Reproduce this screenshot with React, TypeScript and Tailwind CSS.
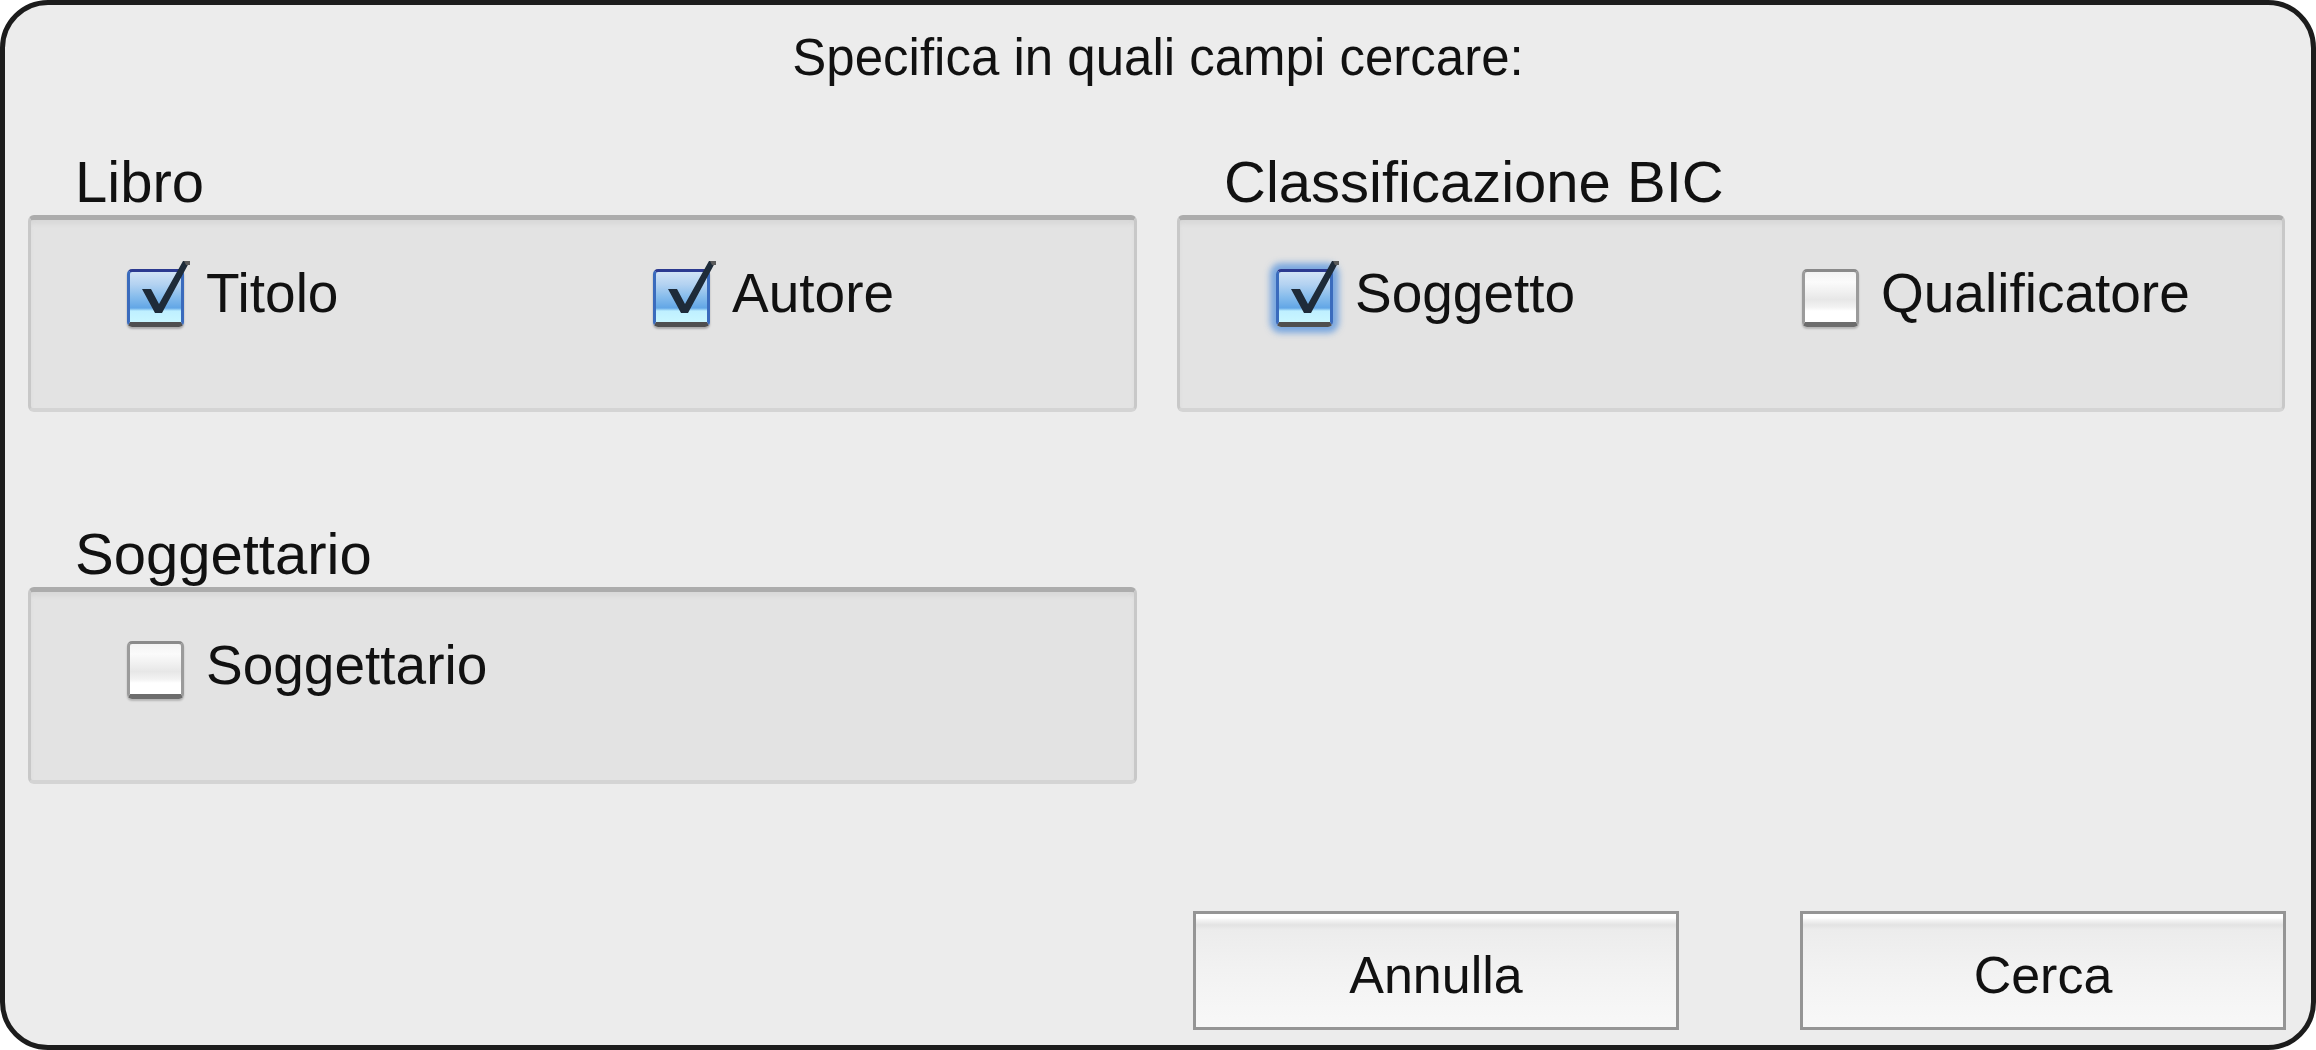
import React from "react";

function Tick() {
  return (
    <svg
      className="absolute left-0 top-[-14px] w-[68px] h-[72px] overflow-visible"
      viewBox="0 -14 68 72"
    >
      <polygon
        points="12,17 21,17 29,32 53,-11 60,-11 32,41 25,41"
        fill="#1e2b39"
      />
      <polygon points="54,-11 60,-11 60,-7 56,-7" fill="#5a5a5a" />
    </svg>
  );
}

function CheckBox({ checked, focused }: { checked: boolean; focused?: boolean }) {
  if (checked) {
    return (
      <div
        className={
          "relative mt-[3px] w-[57px] h-[58px] shrink-0 rounded-[5px] border-x-[3px] border-x-[#3a6bbd] border-t-[3px] border-t-[#2c3a90] border-b-[5px] border-b-[#4f4f4f] bg-[linear-gradient(to_bottom,#d2e3f5_0%,#b3d2f1_25%,#86bcec_50%,#62a6e6_72%,#bff0ff_78%,#c9f6ff_100%)] " +
          (focused
            ? "shadow-[0_0_6px_6px_rgba(88,148,222,0.75)]"
            : "shadow-[0_2px_2px_rgba(0,0,0,0.25)]")
        }
      >
        <Tick />
      </div>
    );
  }
  return (
    <div className="relative mt-[3px] w-[57px] h-[58px] shrink-0 rounded-[5px] border-x-[3px] border-x-[#9b9b9b] border-t-[3px] border-t-[#8a8a8a] border-b-[5px] border-b-[#6d6d6d] bg-[linear-gradient(to_bottom,#f3f3f3_0%,#fbfbfb_20%,#f0f0f0_40%,#e7e7e7_55%,#f2f2f2_70%,#ffffff_78%,#ffffff_100%)] shadow-[0_2px_2px_rgba(0,0,0,0.2)]" />
  );
}

function Item({
  label,
  checked,
  focused,
  wide,
}: {
  label: string;
  checked: boolean;
  focused?: boolean;
  wide?: boolean;
}) {
  return (
    <div className={"flex items-start gap-[22px] " + (wide ? "w-[526px]" : "")}>
      <CheckBox checked={checked} focused={focused} />
      <span className="text-[55px] leading-none h-[55px] text-[#111]">{label}</span>
    </div>
  );
}

function Group({ title, children }: { title: string; children: React.ReactNode }) {
  return (
    <div className="flex flex-col">
      <div className="h-[58px] pl-[47px] text-[58px] leading-none text-[#111]">{title}</div>
      <div className="mt-[4px] h-[197px] rounded-[6px] border-t-[5px] border-t-[#acacac] border-x-[3px] border-x-[#c8c8c8] border-b-[4px] border-b-[#d4d4d4] bg-[#e3e3e3] shadow-[inset_0_5px_4px_-1px_#d8d8d8]">
        <div className="flex pl-[96px] pt-[46px]">{children}</div>
      </div>
    </div>
  );
}

function Button({ label }: { label: string }) {
  return (
    <div className="w-[486px] h-[119px] border-[3px] border-[#959595] bg-[linear-gradient(to_bottom,#ffffff_0px,#ffffff_4px,#f4f4f4_6px,#e3e3e3_11px,#ececec_16px,#f2f2f2_50%,#f8f8f8_100%)] flex items-center justify-center pt-[8px]">
      <span className="text-[52px] leading-none text-[#111]">{label}</span>
    </div>
  );
}

export default function App() {
  return (
    <div className="w-[2316px] h-[1050px] bg-white font-['Liberation_Sans',Arial,sans-serif]">
      <div className="w-full h-full rounded-[48px] border-[5px] border-[#1c1c1c] bg-[#ececec] flex flex-col">
        <div className="mt-[27px] h-[51px] text-center text-[51px] leading-none text-[#111]">
          Specifica in quali campi cercare:
        </div>
        <div className="mt-[70px] pl-[23px] pr-[26px] grid grid-cols-[1109px_1108px] gap-x-[40px] gap-y-[113px]">
          <Group title="Libro">
            <Item label="Titolo" checked wide />
            <Item label="Autore" checked />
          </Group>
          <Group title="Classificazione BIC">
            <Item label="Soggetto" checked focused wide />
            <Item label="Qualificatore" checked={false} />
          </Group>
          <Group title="Soggettario">
            <Item label="Soggettario" checked={false} />
          </Group>
          <div />
        </div>
        <div className="mt-[127px] pr-[25px] flex justify-end gap-[121px]">
          <Button label="Annulla" />
          <Button label="Cerca" />
        </div>
      </div>
    </div>
  );
}
